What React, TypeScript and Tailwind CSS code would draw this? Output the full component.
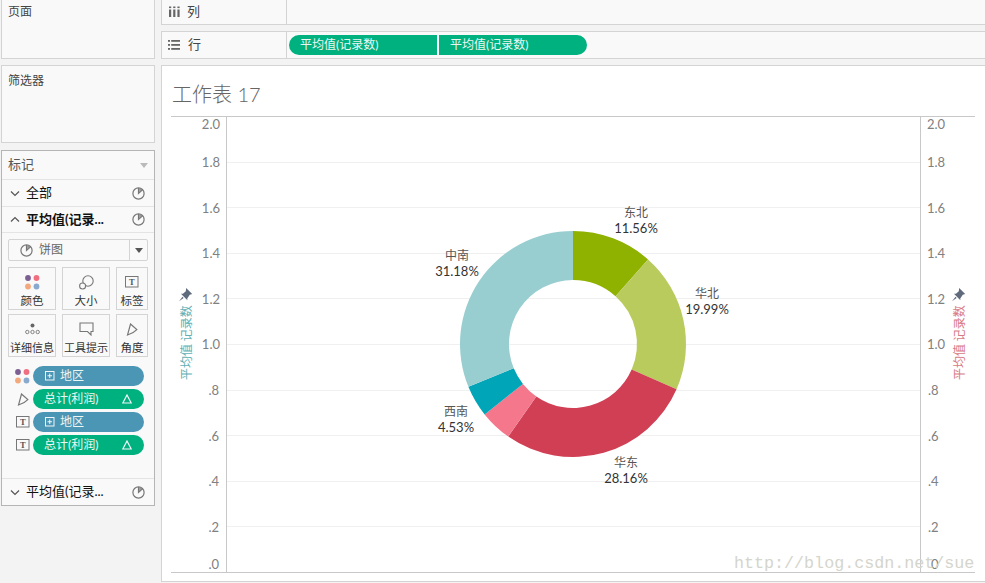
import React from "react";

const F = "font-['Lato','Noto_Sans_CJK_SC',sans-serif]";

function arc(c: number, d: number, color: string) {
  const cx = 573, cy = 344, R = 113, r = 64;
  const p = (v: number, rad: number) => {
    const a = (v / 100) * 2 * Math.PI;
    return `${(cx + rad * Math.sin(a)).toFixed(2)} ${(cy - rad * Math.cos(a)).toFixed(2)}`;
  };
  const large = d - c > 50 ? 1 : 0;
  return (
    <path
      key={color}
      fill={color}
      d={`M${p(c, R)} A${R} ${R} 0 ${large} 1 ${p(d, R)} L${p(d, r)} A${r} ${r} 0 ${large} 0 ${p(c, r)} Z`}
    />
  );
}

const Pie = () => (
  <svg width="13" height="13" viewBox="0 0 13 13" fill="none" stroke="#777" strokeWidth="1.2">
    <circle cx="6.5" cy="6.5" r="5.6" />
    <path d="M6.5 1V6.5L10.5 2.8" />
    <path d="M7.4 1.6L7.4 5.2L10.2 2.7Z" fill="#999" strokeWidth="0.4" />
  </svg>
);

const Chev = ({ up }: { up?: boolean }) => (
  <svg width="10" height="7" viewBox="0 0 10 7" fill="none" stroke="#555" strokeWidth="1.2">
    <path d={up ? "M1 5.5L5 1.5L9 5.5" : "M1 1.5L5 5.5L9 1.5"} />
  </svg>
);

const Dots = () => (
  <svg width="15" height="15" viewBox="0 0 15 15">
    <circle cx="3" cy="3" r="2.9" fill="#7b5f93" />
    <circle cx="11.5" cy="3" r="2.9" fill="#ef6f80" />
    <circle cx="3" cy="11.5" r="2.9" fill="#f3a97c" />
    <circle cx="11.5" cy="11.5" r="2.9" fill="#8aa9cf" />
  </svg>
);

const TBox = () => (
  <svg width="14" height="12" viewBox="0 0 14 12" fill="none">
    <rect x="0.5" y="0.5" width="12.5" height="10.5" stroke="#777" />
    <text x="6.8" y="9" textAnchor="middle" fontSize="8.5" fontWeight="700" fill="#555" fontFamily="Liberation Serif">T</text>
  </svg>
);

const Angle = () => (
  <svg width="12" height="13" viewBox="0 0 12 13" fill="none" stroke="#777" strokeWidth="1.2">
    <path d="M4.5 1L10.8 6.6Q7.5 10.2 1.5 12Z" />
  </svg>
);

const Tile = ({ w, label, icon, small }: { w: string; label: string; icon: React.ReactNode; small?: boolean }) => (
  <div className={`${w} h-[43px] border border-[#d4d4d4] bg-[#f9f9f9] flex flex-col items-center pt-[5px]`}>
    <div className="h-[18px] flex items-center justify-center">{icon}</div>
    <div className={`mt-[2px] whitespace-nowrap text-[#333] leading-[16px] ${small ? "text-[11px]" : "text-[11.5px]"}`}>{label}</div>
  </div>
);

const Pill = ({ color, icon, delta, plus, text }: { color: string; icon: React.ReactNode; delta?: boolean; plus?: boolean; text: string }) => (
  <div className="flex items-center h-[20px] mb-[3px]">
    <div className="w-[15px] ml-[13px] mr-[3px] flex justify-center">{icon}</div>
    <div className={`w-[111px] h-[20px] rounded-full ${color} text-[12px] text-[#eef6f2] flex items-center leading-none`}>
      {plus ? (
        <>
          <svg className="ml-[12px]" width="10" height="10" viewBox="0 0 10 10" fill="none" stroke="#f2f6f8" strokeWidth="1">
            <rect x="0.5" y="0.5" width="8.5" height="8.5" />
            <path d="M2.5 4.75H7M4.75 2.5V7" />
          </svg>
          <span className="ml-[5px]">{text}</span>
        </>
      ) : (
        <span className="ml-[11px]">{text}</span>
      )}
      {delta && (
        <svg className="ml-auto mr-[12px]" width="10" height="10" viewBox="0 0 10 10" fill="none" stroke="#f2f6f8" strokeWidth="1.2">
          <path d="M5 1L9.2 9H0.8Z" />
        </svg>
      )}
    </div>
  </div>
);

const RowHead = ({ label, up, bold, h, border = true }: { label: string; up?: boolean; bold?: boolean; h: string; border?: boolean }) => (
  <div className={`${h} flex items-center pl-[8px] pr-[9px] text-[13px] text-[#111] ${border ? "border-b border-[#e4e4e4]" : ""}`}>
    <Chev up={up} />
    <span className={`ml-[6px] flex-1 whitespace-nowrap ${bold ? "font-bold" : ""}`}>{label}</span>
    <Pie />
  </div>
);

const ticks: [string, number, number, string, number][] = [
  ["2.0", 124, 220, "2.0", 927],
  ["1.8", 162, 220, "1.8", 927],
  ["1.6", 208, 220, "1.6", 927],
  ["1.4", 253, 220, "1.4", 927],
  ["1.2", 299, 220, "1.2", 927],
  ["1.0", 344, 220, "1.0", 927],
  [".8", 390, 219, ".8", 928],
  [".6", 436, 219, ".6", 928],
  [".4", 481, 219, ".4", 928],
  [".2", 527, 219, ".2", 928],
  [".0", 564, 219, "0", 931],
];
const grid = [162, 207, 253, 298, 344, 390, 435, 481, 526];

const labels: [string, string, number, number][] = [
  ["东北", "11.56%", 636, 212],
  ["华北", "19.99%", 707, 293],
  ["华东", "28.16%", 626, 462],
  ["西南", "4.53%", 456, 411],
  ["中南", "31.18%", 457, 255],
];

const PinIcon = ({ x, y }: { x: number; y: number }) => (
  <g transform={`translate(${x} ${y}) scale(1.1)`} fill="#5f6a7d">
    <path d="M6.5 0L12 5.5L9.8 6.2L7.5 9.5L7.6 11.2L1.8 5.2L3.6 5.2L6.2 3Z" />
    <path d="M3.2 8L0 12L4.2 9.2Z" />
  </g>
);

export default function App() {
  return (
    <div className={`relative w-[985px] h-[583px] overflow-hidden bg-[#f3f3f3] flex ${F}`}>
      <div className="w-[154px] ml-px mt-[-1px] flex flex-col shrink-0">
        <div className="h-[60px] border border-[#d4d4d4] bg-[#f9f9f9] pl-[6px] pt-[3px] text-[12px] leading-[18px] text-[#444]">页面</div>
        <div className="mt-[6px] h-[78px] border border-[#d4d4d4] bg-[#f9f9f9] pl-[6px] pt-[6px] text-[12px] leading-[18px] text-[#444]">筛选器</div>
        <div className="mt-[7px] h-[356px] border border-[#b5b5b5] bg-[#f9f9f9] flex flex-col">
          <div className="h-[29px] flex items-center pl-[6px] pr-[6px] text-[13px] text-[#555] border-b border-[#e4e4e4]">
            <span className="flex-1">标记</span>
            <span className="w-0 h-0 border-x-[4px] border-x-transparent border-t-[5px] border-t-[#bbb]" />
          </div>
          <RowHead h="h-[27px]" label="全部" />
          <RowHead h="h-[26px]" label="平均值(记录..." up bold />
          <div className="mx-[6px] mt-[6px] h-[22px] border border-[#d4d4d4] rounded-[2px] flex items-center text-[12px] text-[#666]">
            <span className="ml-[11px]"><Pie /></span>
            <span className="ml-[6px] flex-1">饼图</span>
            <span className="w-[18px] h-full border-l border-[#d4d4d4] flex items-center justify-center">
              <span className="w-0 h-0 border-x-[4px] border-x-transparent border-t-[5px] border-t-[#555]" />
            </span>
          </div>
          <div className="mx-[6px] mt-[6px] flex gap-[6px]">
            <Tile w="w-[48px]" label="颜色" icon={<Dots />} />
            <Tile w="w-[48px]" label="大小" icon={
              <svg width="15" height="15" viewBox="0 0 15 15" fill="none" stroke="#777" strokeWidth="1.1">
                <circle cx="9" cy="6" r="5.2" />
                <circle cx="3.6" cy="11" r="3" fill="#f9f9f9" />
              </svg>
            } />
            <Tile w="w-[32px]" label="标签" icon={<TBox />} />
          </div>
          <div className="mx-[6px] mt-[4px] flex gap-[6px]">
            <Tile w="w-[48px]" small label="详细信息" icon={
              <svg width="15" height="12" viewBox="0 0 15 12" fill="none" stroke="#777" strokeWidth="0.9">
                <circle cx="7.5" cy="2.5" r="2" fill="#666" stroke="none" />
                <circle cx="2.3" cy="9" r="1.7" />
                <circle cx="7.5" cy="9" r="1.7" />
                <circle cx="12.7" cy="9" r="1.7" />
              </svg>
            } />
            <Tile w="w-[48px]" small label="工具提示" icon={
              <svg width="15" height="14" viewBox="0 0 15 14" fill="none" stroke="#777" strokeWidth="1.1">
                <path d="M1 1H14V9.5H12V13L8.5 9.5H1Z" />
              </svg>
            } />
            <Tile w="w-[32px]" label="角度" icon={<Angle />} />
          </div>
          <div className="mt-[9px]">
            <Pill color="bg-[#4c96b5]" icon={<Dots />} plus text="地区" />
            <Pill color="bg-[#00b180]" icon={<Angle />} delta text="总计(利润)" />
            <Pill color="bg-[#4c96b5]" icon={<TBox />} plus text="地区" />
            <Pill color="bg-[#00b180]" icon={<TBox />} delta text="总计(利润)" />
          </div>
          <div className="mt-[20px] border-t border-[#e4e4e4]">
            <RowHead h="h-[26px]" label="平均值(记录..." border={false} />
          </div>
        </div>
      </div>

      <div className="ml-[6px] flex-1 mt-[-1px] flex flex-col min-w-0">
        <div className="h-[26px] border border-[#d4d4d4] border-r-0 bg-[#f9f9f9] flex">
          <div className="w-[125px] border-r border-[#d4d4d4] flex items-center pl-[7px] pb-[1px] text-[13px] text-[#444]">
            <svg width="11" height="11" viewBox="0 0 11 11" fill="#666">
              <rect x="0" y="3.5" width="2.2" height="7.5" />
              <rect x="4.2" y="3.5" width="2.2" height="7.5" />
              <rect x="8.4" y="3.5" width="2.2" height="7.5" />
              <rect x="0" y="0.5" width="2.2" height="1.6" />
              <rect x="4.2" y="0.5" width="2.2" height="1.6" />
              <rect x="8.4" y="0.5" width="2.2" height="1.6" />
            </svg>
            <span className="ml-[7px]">列</span>
          </div>
        </div>
        <div className="mt-[6px] h-[28px] border border-[#d4d4d4] border-r-0 bg-[#f9f9f9] flex">
          <div className="w-[125px] border-r border-[#d4d4d4] flex items-center pl-[6px] text-[13px] text-[#444]">
            <svg width="12" height="10" viewBox="0 0 12 10" fill="#666">
              <rect x="0" y="0" width="2" height="1.8" />
              <rect x="3.2" y="0" width="8.8" height="1.8" />
              <rect x="0" y="4" width="2" height="1.8" />
              <rect x="3.2" y="4" width="8.8" height="1.8" />
              <rect x="0" y="8" width="2" height="1.8" />
              <rect x="3.2" y="8" width="8.8" height="1.8" />
            </svg>
            <span className="ml-[8px]">行</span>
          </div>
          <div className="flex items-center pl-[2px] gap-[2px] text-[12px] text-[#eef6f2]">
            <div className="w-[148px] h-[20px] bg-[#00b180] rounded-l-full flex items-center pl-[11px]">平均值(记录数)</div>
            <div className="w-[148px] h-[20px] bg-[#00b180] rounded-r-full flex items-center pl-[11px]">平均值(记录数)</div>
          </div>
        </div>
        <div className="mt-[6px] h-[517px] border border-[#d4d4d4] border-r-0 bg-white">
          <div className="h-[50px] pl-[10px] pt-[14px] text-[20px] leading-[28px] font-light text-[#666]">工作表 17</div>
          <svg width="823" height="457" viewBox="162 116 823 457" className="block">
            {grid.map((y) => (
              <line key={y} x1="227" x2="920" y1={y + 0.5} y2={y + 0.5} stroke="#f0f0f0" />
            ))}
            <line x1="171" x2="975" y1="116.5" y2="116.5" stroke="#c8c8c8" />
            <line x1="171" x2="975" y1="572.5" y2="572.5" stroke="#c8c8c8" />
            <line x1="226.5" x2="226.5" y1="116" y2="572" stroke="#c8c8c8" />
            <line x1="920.5" x2="920.5" y1="116" y2="572" stroke="#c8c8c8" />
            {ticks.map(([l, y, lx, r, rx]) => (
              <React.Fragment key={y}>
                <text x={lx} y={y + 5} textAnchor="end" fontSize="13" fill="#808080" fontFamily="Lato">{l}</text>
                <text x={rx} y={y + 5} fontSize="13" fill="#808080" fontFamily="Lato">{r}</text>
              </React.Fragment>
            ))}
            {arc(0, 11.56, "#8fb100")}
            {arc(11.56, 31.55, "#b9cb5d")}
            {arc(31.55, 59.71, "#d13f55")}
            {arc(59.71, 64.29, "#f4778c")}
            {arc(64.29, 68.82, "#00a5b8")}
            {arc(68.82, 100, "#99ced0")}
            {labels.map(([a, b, x, y]) => (
              <React.Fragment key={a}>
                <text x={x} y={y + 5} textAnchor="middle" fontSize="12" fill="#555" fontFamily="Noto Sans CJK SC">{a}</text>
                <text x={x} y={y + 21} textAnchor="middle" fontSize="13" fill="#333" fontFamily="Lato">{b}</text>
              </React.Fragment>
            ))}
            <PinIcon x={179} y={288} />
            <PinIcon x={952} y={288} />
            <text transform="translate(191 380) rotate(-90)" fontSize="12" fill="#5fb0b5" fontFamily="Noto Sans CJK SC">平均值 记录数</text>
            <text transform="translate(964 380) rotate(-90)" fontSize="12" fill="#d87a84" fontFamily="Noto Sans CJK SC">平均值 记录数</text>
          </svg>
        </div>
      </div>

      <div className="absolute left-[734px] top-[552px] font-['Liberation_Mono',monospace] text-[16.7px] leading-[24px] text-[#d5d5cc] whitespace-nowrap">http://blog.csdn.net/sue</div>
    </div>
  );
}
